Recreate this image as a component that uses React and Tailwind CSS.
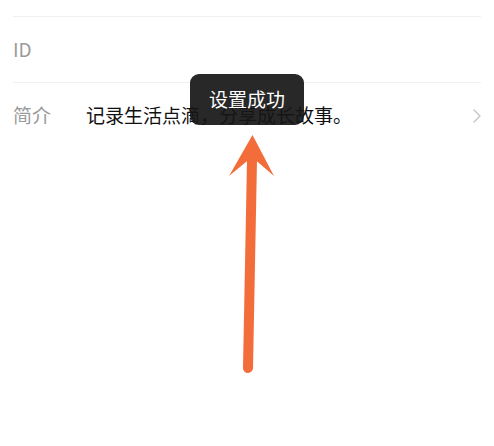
const rows = [
  { label: 'ID', value: '' },
  { label: '简介', value: '记录生活点滴，分享成长故事。', arrow: true },
];

const Chevron = () => (
  <svg width="8" height="14" viewBox="0 0 8 14" fill="none">
    <path d="M1 1l6 6-6 6" stroke="#c4c4c4" strokeWidth="1.3" strokeLinecap="round" strokeLinejoin="round" />
  </svg>
);

export default function App() {
  return (
    <div
      className="relative w-[494px] h-[446px] bg-white overflow-hidden"
      style={{ fontFamily: '"Noto Sans CJK SC", "Noto Sans", sans-serif' }}
    >
      {/* Profile rows */}
      <div className="px-[13px] pt-[16px]">
        {rows.map((row) => (
          <div
            key={row.label}
            className="flex items-center h-[66px] border-t border-[#f0f0f0]"
          >
            <div className="w-[73px] text-[19px] text-[#9a9a9a]">{row.label}</div>
            <div className="flex-1 text-[19px] text-[#111]">{row.value}</div>
            {row.arrow && <Chevron />}
          </div>
        ))}
      </div>

      {/* Toast */}
      <div className="absolute left-[190px] top-[74px] w-[114px] h-[51px] rounded-[9px] bg-[#161616]/92 flex items-center justify-center">
        <span className="text-[19px] text-white">设置成功</span>
      </div>

      {/* Annotation arrow */}
      <svg className="absolute inset-0 pointer-events-none" width="494" height="446" viewBox="0 0 494 446">
        <line x1="252" y1="160" x2="248" y2="368" stroke="#f26d3a" strokeWidth="10" strokeLinecap="round" />
        <path d="M252.5 135 L274 176 L252 157 L229 176 Z" fill="#f26d3a" />
      </svg>
    </div>
  );
}
